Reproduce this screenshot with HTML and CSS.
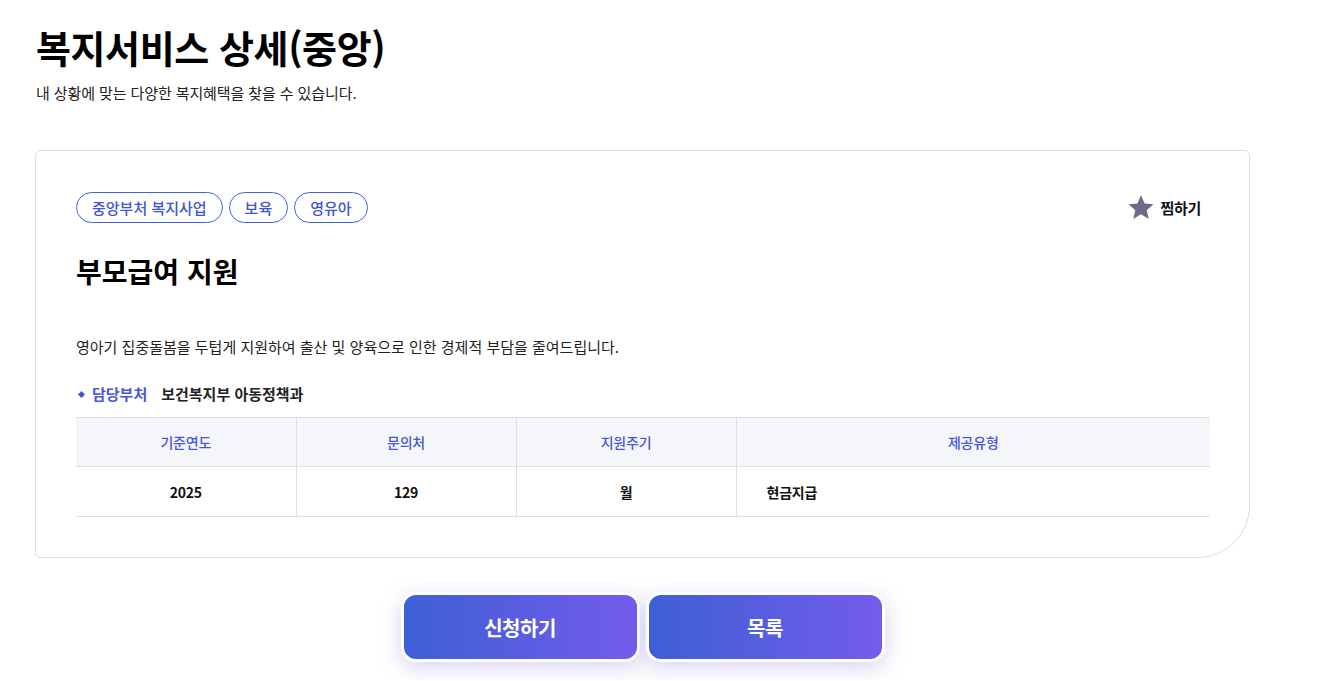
FILE: index.html
```html
<!DOCTYPE html>
<html lang="ko">
<head>
<meta charset="utf-8">
<title>복지서비스 상세(중앙)</title>
<link rel="stylesheet" href="styles.css">
</head>
<body>
<div class="page">
  <header class="page-head">
    <h1 class="page-title">복지서비스 상세(중앙)</h1>
    <p class="page-sub">내 상황에 맞는 다양한 복지혜택을 찾을 수 있습니다.</p>
  </header>

  <section class="card">
    <div class="card-top">
      <div class="tags">
        <span class="tag">중앙부처 복지사업</span>
        <span class="tag">보육</span>
        <span class="tag">영유아</span>
      </div>
      <button class="fav" type="button">
        <svg class="star" viewBox="0 0 24 24" width="28" height="27" aria-hidden="true"><path d="M12 1.2l3.2 7.3 7.9.7-6 5.2 1.8 7.8L12 18.1l-6.9 4.1 1.8-7.8-6-5.2 7.9-.7z" fill="#6b6d86"/></svg>
        <span>찜하기</span>
      </button>
    </div>
    <h2 class="svc-title">부모급여 지원</h2>
    <p class="svc-desc">영아기 집중돌봄을 두텁게 지원하여 출산 및 양육으로 인한 경제적 부담을 줄여드립니다.</p>
    <div class="dept">
      <span class="dept-dot"></span>
      <span class="dept-label">담당부처</span>
      <span class="dept-value">보건복지부 아동정책과</span>
    </div>
    <table class="info">
      <thead>
        <tr>
          <th class="c1">기준연도</th>
          <th class="c2">문의처</th>
          <th class="c3">지원주기</th>
          <th class="c4">제공유형</th>
        </tr>
      </thead>
      <tbody>
        <tr>
          <td>2025</td>
          <td>129</td>
          <td>월</td>
          <td class="left">현금지급</td>
        </tr>
      </tbody>
    </table>
  </section>

  <div class="actions">
    <button class="btn" type="button">신청하기</button>
    <button class="btn" type="button">목록</button>
  </div>
</div>
</body>
</html>
```

FILE: styles.css
```css
* { box-sizing: border-box; }
html, body { margin: 0; padding: 0; background: #fff; }
body {
  font-family: "Noto Sans CJK KR", "Noto Sans", sans-serif;
  color: #111;
}
.page {
  width: 1215px;
  margin-left: 35px;
  padding-top: 20px;
  padding-bottom: 18px;
}
.page-head { padding-left: 1px; }
.page-title {
  margin: 0;
  font-size: 38px;
  line-height: 54px;
  font-weight: 700;
  letter-spacing: -0.4px;
  color: #000;
}
.page-sub {
  margin: 8px 0 0;
  font-size: 15px;
  line-height: 22px;
  letter-spacing: -0.1px;
  color: #222;
}
.card {
  margin-top: 46px;
  border: 1px solid #dcdde2;
  border-radius: 6px 6px 52px 6px;
  padding: 41px 40px 40px 40px;
  height: 408px;
}
.card-top {
  display: flex;
  align-items: center;
  justify-content: space-between;
}
.tags { display: flex; gap: 6px; }
.tag {
  display: inline-flex;
  align-items: center;
  height: 31px;
  padding: 0 15px;
  border: 1px solid #3e63d6;
  border-radius: 16px;
  font-size: 15px;
  font-weight: 500;
  color: #3e55cf;
}
.fav {
  display: flex;
  align-items: center;
  gap: 5px;
  border: 0;
  background: none;
  padding: 0;
  margin-right: 8px;
  font-family: inherit;
  font-size: 15px;
  font-weight: 700;
  letter-spacing: -0.3px;
  color: #111;
}
.svc-title {
  margin: 28px 0 0;
  font-size: 28px;
  line-height: 40px;
  font-weight: 700;
  color: #000;
}
.svc-desc {
  margin: 45px 0 0;
  font-size: 15px;
  line-height: 22px;
  color: #222;
}
.dept {
  margin-top: 26px;
  display: flex;
  align-items: center;
  font-size: 15px;
  font-weight: 700;
  line-height: 20px;
  padding-left: 3px;
}
.dept-dot {
  width: 5px;
  height: 5px;
  background: #3e55cf;
  transform: rotate(45deg);
  margin-right: 8px;
}
.dept-label { color: #4a56d8; margin-right: 14px; }
.dept-value { color: #222; }
.info {
  margin-top: 13px;
  width: 1134px;
  border-collapse: collapse;
  font-size: 14px;
  letter-spacing: -0.2px;
}
.info th, .info td {
  height: 50px;
  border-top: 1px solid #dedfe3;
  border-bottom: 1px solid #dedfe3;
  text-align: center;
  padding: 0;
}
.info th + th, .info td + td { border-left: 1px solid #dedfe3; }
.info th {
  background: #f5f6fa;
  color: #4a56d8;
  font-weight: 500;
  height: 49px;
}
.info td { font-weight: 700; color: #111; }
.info td.left { text-align: left; padding-left: 30px; }
.c1, .c2, .c3 { width: 220px; }
.actions {
  display: flex;
  justify-content: center;
  gap: 6px;
  margin-top: 34px;
}
.btn {
  width: 239px;
  height: 70px;
  border: 3px solid #fff;
  border-radius: 15px;
  background: linear-gradient(90deg, #3d5fd6 0%, #745ceb 100%);
  color: #fff;
  font-family: inherit;
  font-size: 20px;
  font-weight: 700;
  letter-spacing: -0.5px;
  box-shadow: 0 6px 22px rgba(110, 100, 210, 0.28);
}
```
